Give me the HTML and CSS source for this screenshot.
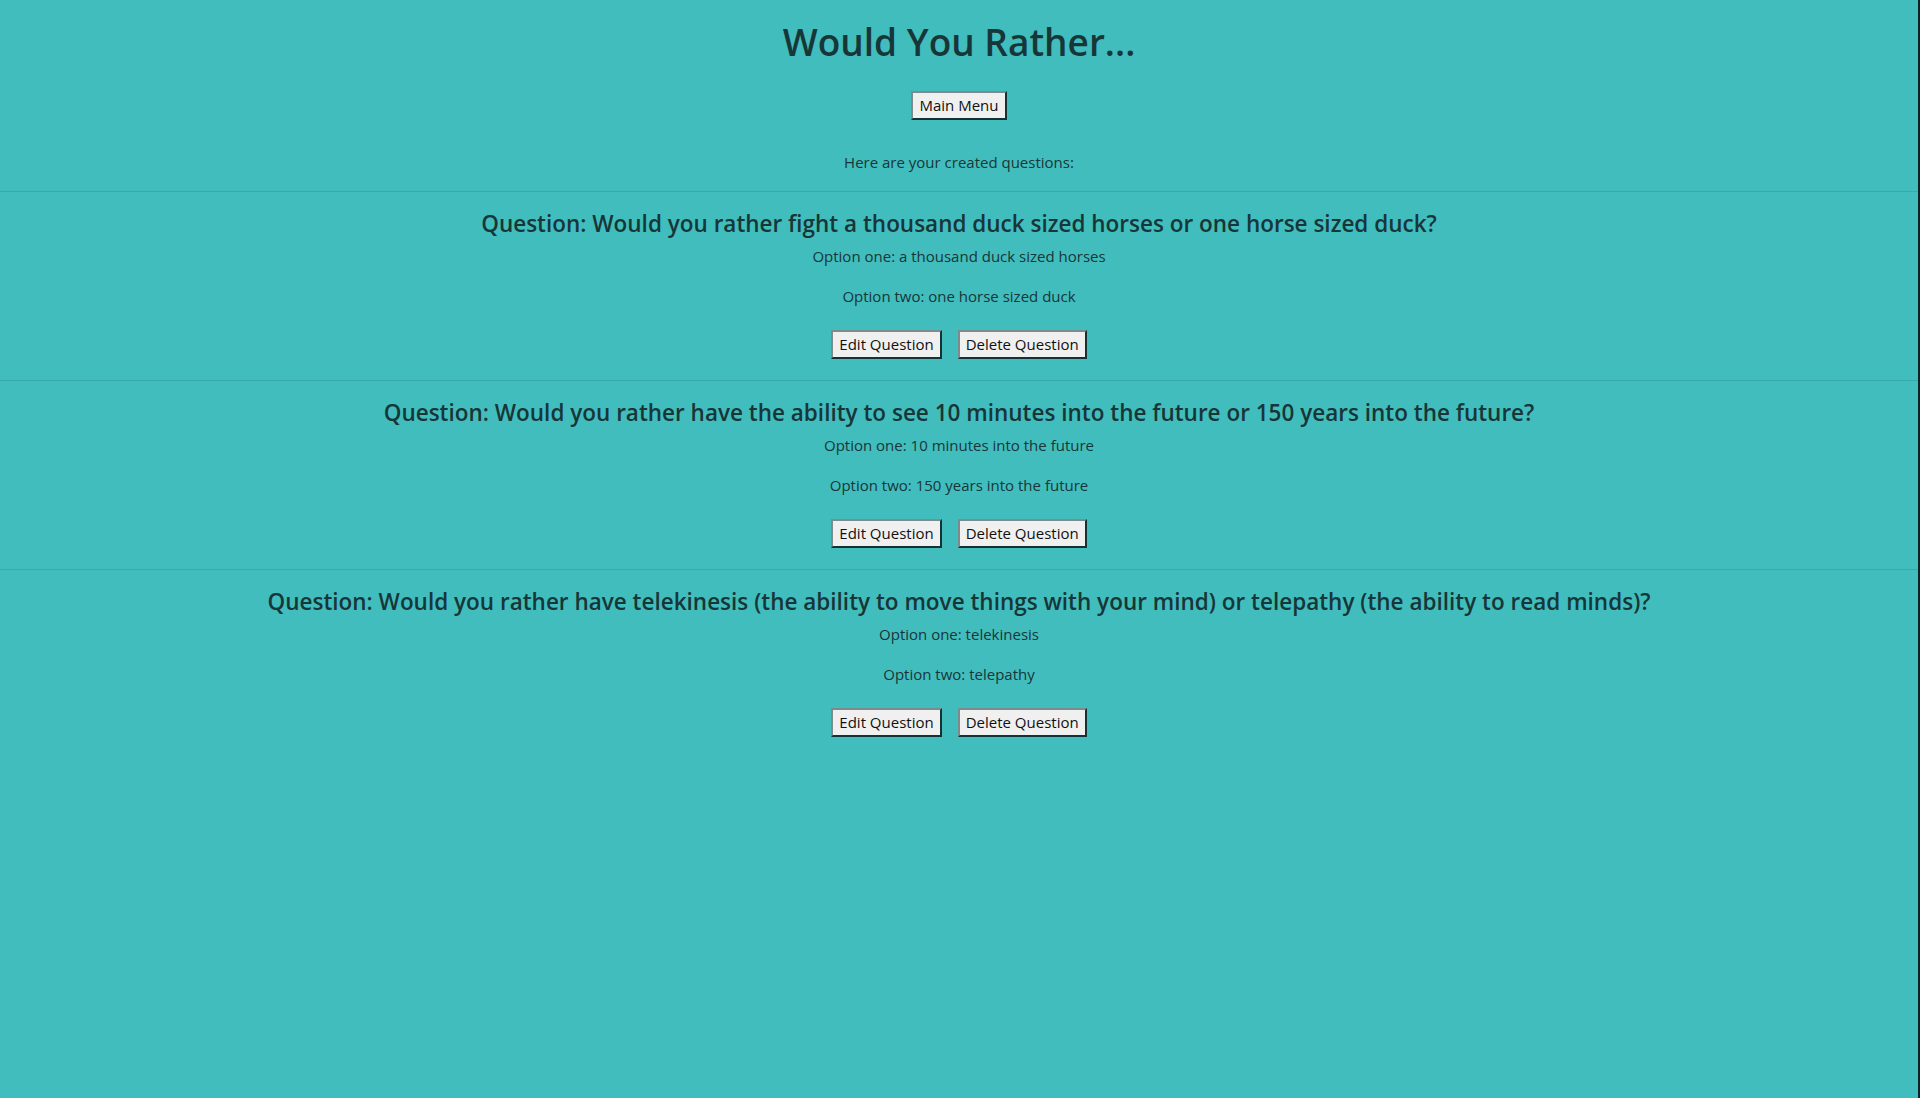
FILE: index.html
```html
<!DOCTYPE html>
<html lang="en">
<head>
<meta charset="utf-8">
<title>Would You Rather...</title>
<link rel="stylesheet" href="styles.css">
</head>
<body>
<div class="page">
  <header class="top">
    <h1 class="title">Would You Rather...</h1>
    <button class="btn">Main Menu</button>
    <p class="intro">Here are your created questions:</p>
  </header>
  <section class="question">
    <h2 class="q-title">Question: Would you rather fight a thousand duck sized horses or one horse sized duck?</h2>
    <p class="opt opt-one">Option one: a thousand duck sized horses</p>
    <p class="opt opt-two">Option two: one horse sized duck</p>
    <div class="actions">
      <button class="btn">Edit Question</button>
      <button class="btn">Delete Question</button>
    </div>
  </section>
  <section class="question">
    <h2 class="q-title">Question: Would you rather have the ability to see 10 minutes into the future or 150 years into the future?</h2>
    <p class="opt opt-one">Option one: 10 minutes into the future</p>
    <p class="opt opt-two">Option two: 150 years into the future</p>
    <div class="actions">
      <button class="btn">Edit Question</button>
      <button class="btn">Delete Question</button>
    </div>
  </section>
  <section class="question">
    <h2 class="q-title">Question: Would you rather have telekinesis (the ability to move things with your mind) or telepathy (the ability to read minds)?</h2>
    <p class="opt opt-one">Option one: telekinesis</p>
    <p class="opt opt-two">Option two: telepathy</p>
    <div class="actions">
      <button class="btn">Edit Question</button>
      <button class="btn">Delete Question</button>
    </div>
  </section>
</div>
</body>
</html>
```

FILE: styles.css
```css
html, body {
  margin: 0;
  padding: 0;
  height: 100%;
}
body {
  background: #42bdbd;
  color: #173638;
  font-family: "Open Sans", "Noto Sans", sans-serif;
  border-right: 2px solid #0d2224;
  box-sizing: border-box;
}
.page {
  display: flex;
  flex-direction: column;
}
.top {
  display: flex;
  flex-direction: column;
  align-items: center;
}
.title {
  margin: 16px 0 0;
  font-size: 37px;
  line-height: 52px;
  font-weight: 600;
}
.btn {
  font-family: "Open Sans", "Noto Sans", sans-serif;
  font-size: 15px;
  line-height: 21px;
  color: #111;
  background: #f0f0f0;
  padding: 2px 6px;
  border-width: 2px;
  border-style: solid;
  border-color: #7c8c8c #143234 #143234 #7c8c8c;
  cursor: pointer;
}
.top .btn {
  margin-top: 23px;
}
.intro {
  margin: 32px 0 19px;
  font-size: 15px;
  line-height: 20px;
}
.question {
  border-top: 1px solid #35abab;
  padding: 16px 0 21px;
  display: flex;
  flex-direction: column;
  align-items: center;
  text-align: center;
}
.q-title {
  margin: 0;
  font-size: 22.5px;
  line-height: 32px;
  font-weight: 600;
}
.opt {
  margin: 0;
  font-size: 15px;
  line-height: 20px;
}
.opt-one {
  margin-top: 6px;
}
.opt-two {
  margin-top: 20px;
}
.actions {
  margin-top: 24px;
  display: flex;
  gap: 16px;
}
```
